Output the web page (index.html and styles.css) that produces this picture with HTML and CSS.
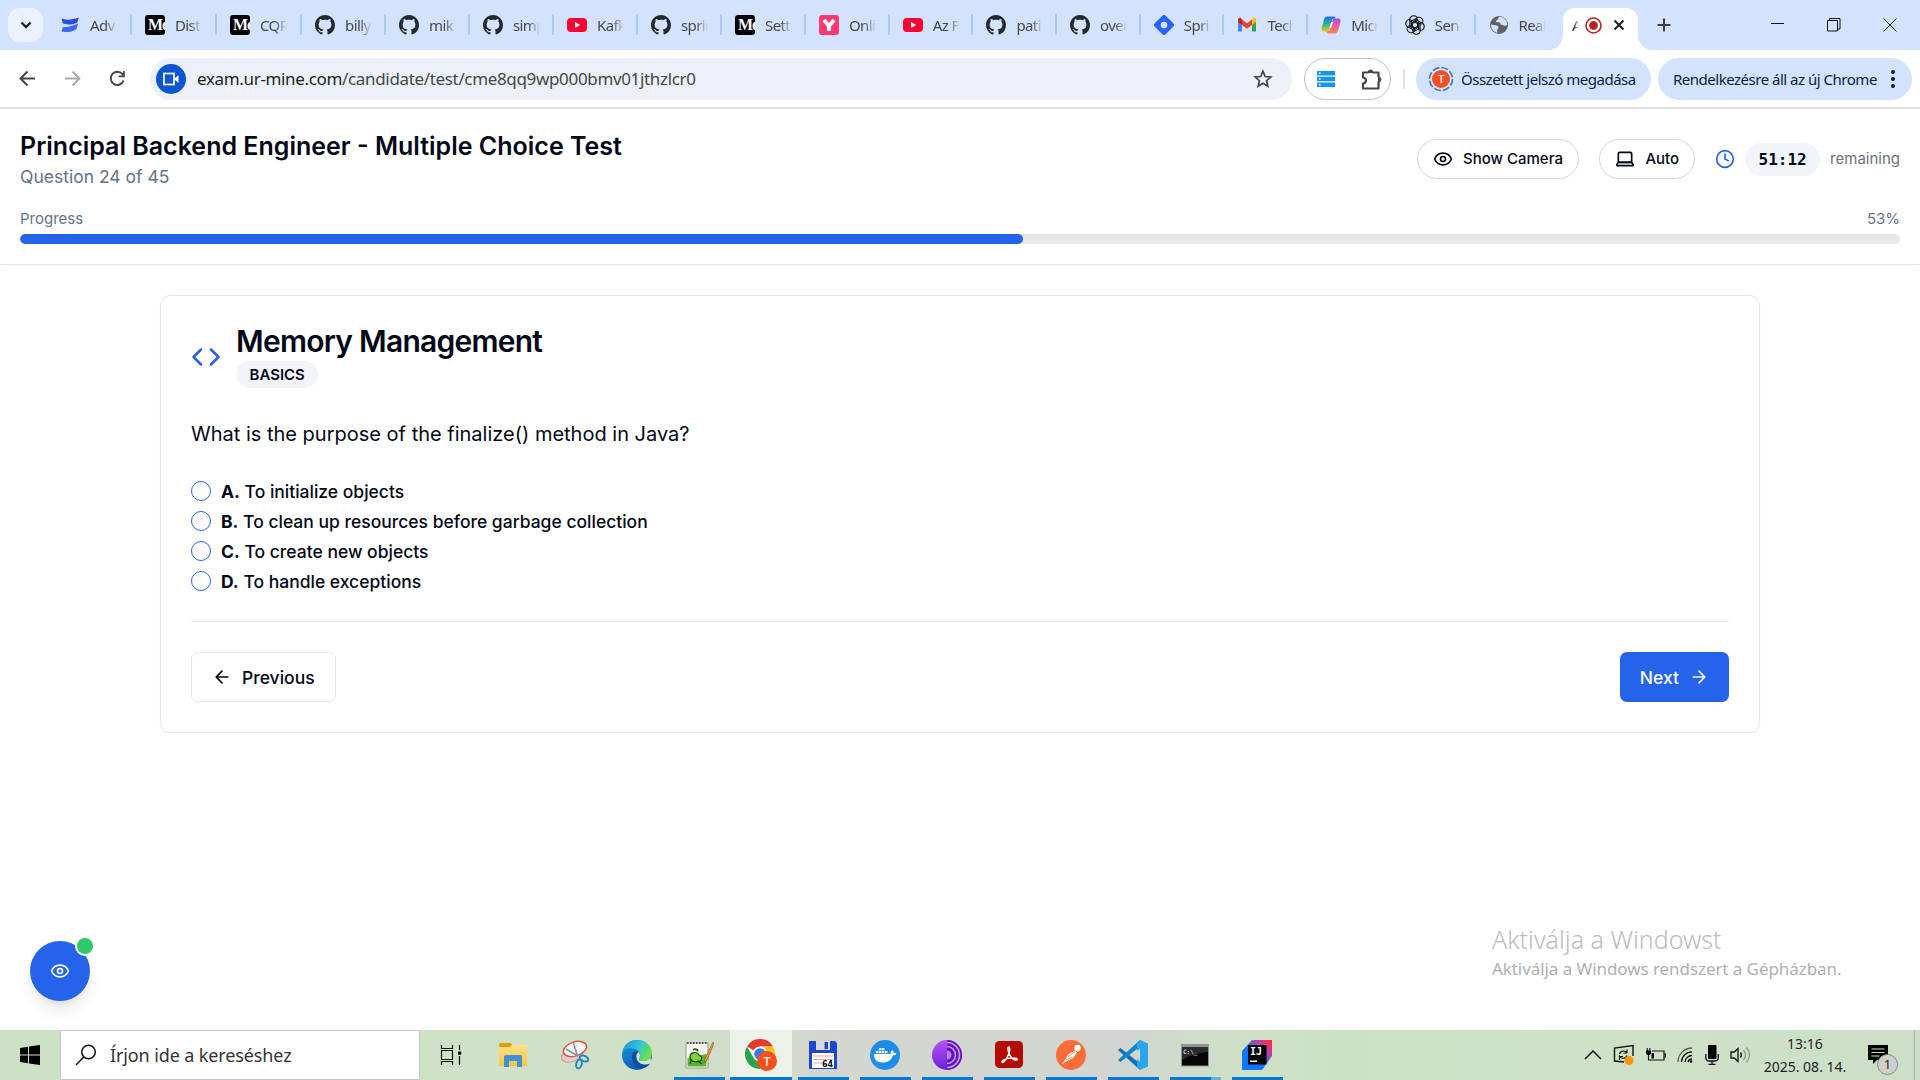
FILE: index.html
```html
<!DOCTYPE html>
<html lang="hu">
<head>
<meta charset="utf-8">
<title>Principal Backend Engineer - Multiple Choice Test</title>
<link rel="stylesheet" href="styles.css">
</head>
<body>
<svg class="defs" width="0" height="0" aria-hidden="true">
  <defs>
    <linearGradient id="edgeA" x1="0" y1="0" x2="1" y2="0.4"><stop offset="0" stop-color="#1b8fd6"/><stop offset="0.55" stop-color="#2fc2df"/><stop offset="1" stop-color="#6be04c"/></linearGradient>
    <linearGradient id="edgeB" x1="0" y1="0" x2="0.6" y2="1"><stop offset="0" stop-color="#1a9be0"/><stop offset="1" stop-color="#0b55b5"/></linearGradient>
    <linearGradient id="copA" x1="0" y1="0" x2="0" y2="1"><stop offset="0" stop-color="#1b6df0"/><stop offset="0.55" stop-color="#35b88a"/><stop offset="1" stop-color="#f5c51c"/></linearGradient>
    <linearGradient id="copB" x1="0" y1="0" x2="0" y2="1"><stop offset="0" stop-color="#a04df0"/><stop offset="0.5" stop-color="#ee5aa0"/><stop offset="1" stop-color="#f78a3c"/></linearGradient>
    <linearGradient id="ideaBg" x1="0" y1="1" x2="1" y2="0"><stop offset="0" stop-color="#087cfa"/><stop offset="0.45" stop-color="#1573f5"/><stop offset="0.7" stop-color="#a44bb5"/><stop offset="0.9" stop-color="#fe2857"/></linearGradient>
    <linearGradient id="folder" x1="0" y1="0" x2="0" y2="1"><stop offset="0" stop-color="#ffe08a"/><stop offset="1" stop-color="#fac73a"/></linearGradient>
    <linearGradient id="torL" x1="0" y1="0" x2="0" y2="1"><stop offset="0" stop-color="#b753f5"/><stop offset="1" stop-color="#6a21d8"/></linearGradient>
  </defs>
  <symbol id="conf" viewBox="0 0 20 20"><path d="M1.500 3.600C6 5.400 12 4.800 18.800 2.600L17.300 7.400C13 9.600 7 10 2.800 8.600z" fill="#2a4fe0"/><path d="M2.800 12.200C8 12.200 13 11 18 8.600L16.400 14.200C12 17 6 17.600 1.500 16.600z" fill="#3b66f6"/></symbol>
  <symbol id="gh" viewBox="0 0 16 16"><path fill="#24292f" d="M8 0C3.580 0 0 3.580 0 8c0 3.540 2.290 6.530 5.470 7.590.4.070.55-.17.55-.38 0-.19-.01-.82-.01-1.490-2.010.37-2.530-.49-2.690-.94-.09-.23-.48-.94-.82-1.130-.28-.15-.68-.52-.01-.53.63-.01 1.080.58 1.230.82.72 1.210 1.870.87 2.330.66.070-.52.28-.87.51-1.070-1.780-.2-3.640-.89-3.640-3.950 0-.87.31-1.590.82-2.150-.08-.2-.36-1.020.08-2.120 0 0 .67-.21 2.200.82.640-.18 1.320-.27 2-.27s1.360.09 2 .27c1.530-1.040 2.200-.82 2.200-.82.44 1.100.16 1.920.08 2.120.51.56.82 1.270.82 2.150 0 3.070-1.870 3.750-3.650 3.950.29.25.54.73.54 1.480 0 1.070-.01 1.930-.01 2.200 0 .21.15.46.55.38A8.010 8.010 0 0 0 16 8c0-4.420-3.580-8-8-8z"/></symbol>
  <symbol id="yt" viewBox="0 0 20 20"><rect y="3" width="20" height="14" rx="4" fill="#ff0033"/><path d="M8 7l5.200 3L8 13z" fill="#fff"/></symbol>
  <symbol id="ylogo" viewBox="0 0 20 20"><rect width="20" height="20" rx="3" fill="#fb3a74"/><path d="M5 5l5 6 5-6M10 10.500V16" fill="none" stroke="#fff" stroke-width="3.800"/></symbol>
  <symbol id="diamond" viewBox="0 0 20 20"><path d="M8.300.8a2.400 2.400 0 0 1 3.400 0l7.500 7.500a2.400 2.400 0 0 1 0 3.400l-7.500 7.500a2.400 2.400 0 0 1-3.400 0L.8 11.700a2.400 2.400 0 0 1 0-3.400z" fill="#2962f6"/><circle cx="10" cy="10" r="3.300" fill="#d3e2fd"/></symbol>
  <symbol id="gmail" viewBox="0 0 20 20"><path d="M1 5v11.500h4V9z" fill="#4285f4"/><path d="M15 9v7.500h4V5z" fill="#34a853"/><path d="M15 4.500V10l4-3V5c0-2-2-2.600-3-1.800z" fill="#fbbc04"/><path d="M5 4.500V10l5 3.700 5-3.700V4.500l-5 3.800z" fill="#ea4335"/><path d="M1 5v2l4 3V4.500L4 3.200C3 2.400 1 3 1 5z" fill="#c5221f"/></symbol>
  <symbol id="copilot" viewBox="0 0 20 20"><path d="M6 1.500h6.500c1.400 0 1.900.8 2.200 2L11.500 4 8.300 14.500c-.4 1.400-1 2-2.400 2H3C.6 16.500 0 15 .6 12.800L3 4.500c.6-2 1.500-3 3-3z" fill="url(#copA)"/><path d="M14 18.500H7.500c-1.400 0-1.900-.8-2.200-2l3-.5 3.400-10.500c.4-1.400 1-2 2.400-2H17c2.400 0 3 1.500 2.400 3.700L17 15.500c-.6 2-1.500 3-3 3z" fill="url(#copB)"/><path d="M10.300 7h2L10.100 13h-2z" fill="#f4f2fb"/></symbol>
  <symbol id="gpt" viewBox="0 0 20 20"><g fill="none" stroke="#111" stroke-width="1.150"><path id="petal" d="M4.900 12.500V6.100A3.900 3.900 0 0 1 12.400 3.400M7.400 11.500V7.300L12.800 4.200"/><use href="#petal" transform="rotate(60 10 10)"/><use href="#petal" transform="rotate(120 10 10)"/><use href="#petal" transform="rotate(180 10 10)"/><use href="#petal" transform="rotate(240 10 10)"/><use href="#petal" transform="rotate(300 10 10)"/></g></symbol>
  <symbol id="globe" viewBox="0 0 20 20"><circle cx="10" cy="10" r="9" fill="#5f6368"/><path d="M10.500 1.800c-2 1.200-.5 2.200-2.500 3.200s-1 2.200.5 2.300 3 .2 3 1.700 2.500.7 3.300 1.500 2.700 0 3.500-1C18 5 14.500 1.800 10.500 1.800zM2 9.500c2 0 3.500.8 5.500 1s2.500 2 1.500 3-1 2-.5 4.200C5 17.500 1.800 14 2 9.500z" fill="#d3e2fd"/></symbol>
  <symbol id="eye" viewBox="0 0 24 24"><g fill="none" stroke="currentColor" stroke-width="2" stroke-linecap="round" stroke-linejoin="round"><path d="M2.062 12.348a1 1 0 0 1 0-.696 10.750 10.750 0 0 1 19.876 0 1 1 0 0 1 0 .696 10.750 10.750 0 0 1-19.876 0"/><circle cx="12" cy="12" r="3"/></g></symbol>
</svg>

<header class="tabstrip">
  <div class="tabsearch"><svg width="14" height="14" viewBox="0 0 14 14"><path d="M2.500 4.500L7 9l4.500-4.500" fill="none" stroke="#1f1f1f" stroke-width="2.400"/></svg></div>
  <div class="tabs">
    <div class="tab"><svg class="fav"><use href="#conf"/></svg><span>Adv</span></div>
    <div class="tab"><i class="fav medium">Me</i><span>Dist</span></div>
    <div class="tab"><i class="fav medium">Me</i><span>CQR</span></div>
    <div class="tab"><svg class="fav"><use href="#gh"/></svg><span>billy</span></div>
    <div class="tab"><svg class="fav"><use href="#gh"/></svg><span>mik</span></div>
    <div class="tab"><svg class="fav"><use href="#gh"/></svg><span>simp</span></div>
    <div class="tab"><svg class="fav"><use href="#yt"/></svg><span>Kafk</span></div>
    <div class="tab"><svg class="fav"><use href="#gh"/></svg><span>sprin</span></div>
    <div class="tab"><i class="fav medium">Me</i><span>Sett</span></div>
    <div class="tab"><svg class="fav"><use href="#ylogo"/></svg><span>Onli</span></div>
    <div class="tab"><svg class="fav"><use href="#yt"/></svg><span>Az F</span></div>
    <div class="tab"><svg class="fav"><use href="#gh"/></svg><span>pati</span></div>
    <div class="tab"><svg class="fav"><use href="#gh"/></svg><span>over</span></div>
    <div class="tab"><svg class="fav"><use href="#diamond"/></svg><span>Spri</span></div>
    <div class="tab"><svg class="fav"><use href="#gmail"/></svg><span>Tech</span></div>
    <div class="tab"><svg class="fav"><use href="#copilot"/></svg><span>Micr</span></div>
    <div class="tab"><svg class="fav"><use href="#gpt"/></svg><span>Sen</span></div>
    <div class="tab last"><svg class="fav"><use href="#globe"/></svg><span>Real</span></div>
  </div>
  <div class="tab-active">
    <span>A</span>
    <svg width="17" height="17" viewBox="0 0 17 17"><circle cx="8.500" cy="8.500" r="7.500" fill="none" stroke="#b3261e" stroke-width="1.600"/><circle cx="8.500" cy="8.500" r="4.400" fill="#b3261e"/></svg>
    <svg width="12" height="12" viewBox="0 0 12 12"><path d="M1.500 1.500l9 9M10.500 1.500l-9 9" stroke="#1f1f1f" stroke-width="2"/></svg>
  </div>
  <svg class="plus" width="14" height="14" viewBox="0 0 14 14"><path d="M7 .5v13M.5 7h13" stroke="#3c4043" stroke-width="2"/></svg>
  <div class="winctl">
    <svg width="14" height="14" viewBox="0 0 14 14"><path d="M0 5.500h13" stroke="#111" stroke-width="1"/></svg>
    <svg width="14" height="14" viewBox="0 0 14 14"><path d="M.5 2.500h10v10.500h-10zM2.500 2.500v-2h10.500v10.500h-2.500" fill="none" stroke="#111"/></svg>
    <svg width="14" height="14" viewBox="0 0 14 14"><path d="M.5.5l13 13M13.500.5l-13 13" stroke="#222"/></svg>
  </div>
</header>

<nav class="toolbar">
  <div class="navbtns">
    <svg width="17" height="17" viewBox="0 0 17 17"><path d="M16 8.500H2M8.500 1.500l-7 7 7 7" fill="none" stroke="#444746" stroke-width="2"/></svg>
    <svg width="17" height="17" viewBox="0 0 17 17"><path d="M1 8.500h14M8.500 1.500l7 7-7 7" fill="none" stroke="#a9abad" stroke-width="2"/></svg>
    <svg width="17" height="17" viewBox="0 0 17 17"><path d="M14.600 10.500a6.600 6.600 0 1 1-1.300-6.600L15 5.800" fill="none" stroke="#444746" stroke-width="2"/><path d="M15.800 1v6.200H9.600V5.400H14V1z" fill="#444746"/></svg>
  </div>
  <div class="omnibox">
    <div class="cam"><svg width="16" height="14" viewBox="0 0 16 14"><rect x="1" y="1.500" width="10" height="11" fill="none" stroke="#fff" stroke-width="1.700"/><path d="M11 7l4.500-4v8z" fill="#fff"/></svg></div>
    <div class="url"><b>exam.ur-mine.com</b>/candidate/test/cme8qq9wp000bmv01jthzlcr0</div>
    <svg class="star" width="20" height="20" viewBox="0 0 20 20"><path d="M10 2.300l2.200 5.200 5.600.5-4.200 3.700 1.200 5.500L10 14.300l-4.800 2.900 1.200-5.500L2.200 8l5.600-.5z" fill="none" stroke="#444746" stroke-width="1.700"/></svg>
  </div>
  <div class="exts">
    <svg width="18" height="16" viewBox="0 0 18 16"><g fill="#1795f5"><path d="M0 0h18v4.400H0zM0 5.800h18v4.400H0zM0 11.600h18V16H0z"/></g><g fill="#fff"><path d="M2 1.500h1.500v1.500H2zM2 7.300h1.500v1.500H2zM2 13h1.500v1.500H2z"/></g></svg>
    <svg width="22" height="22" viewBox="0 0 22 22"><path d="M2 4.500h5.500M11.500 4.500H17.500V9M17.500 13.500V20.500H2V15.500c4-.5 4-5.500 0-6V4.500H7" fill="none" stroke="#444746" stroke-width="2.200" stroke-linejoin="round"/><path d="M7 4.500a2.500 2.500 0 0 1 5 0zM17.500 9a2.500 2.500 0 0 1 0 5z" fill="#444746" stroke="#444746"/></svg>
  </div>
  <i class="vsep"></i>
  <div class="chip profile">
    <svg width="26" height="26" viewBox="0 0 26 26"><circle cx="13" cy="13" r="11.500" fill="none" stroke="#4f78b8" stroke-width="1.700" stroke-dasharray="7 2.030"/><circle cx="13" cy="13" r="9" fill="#f4511e"/><text x="13" y="17" text-anchor="middle" class="avatar-t">T</text></svg>
    <span>Összetett jelszó megadása</span>
  </div>
  <div class="chip update">
    <span>Rendelkezésre áll az új Chrome</span>
    <svg width="6" height="20" viewBox="0 0 6 20"><g fill="#041e49"><circle cx="3" cy="3" r="2"/><circle cx="3" cy="10" r="2"/><circle cx="3" cy="17" r="2"/></g></svg>
  </div>
</nav>

<main class="page">
  <section class="exam-head">
    <div class="head-row">
      <div>
        <h1>Principal Backend Engineer - Multiple Choice Test</h1>
        <p class="sub">Question 24 of 45</p>
      </div>
      <div class="head-tools">
        <button class="pill"><svg width="20" height="20"><use href="#eye"/></svg>Show Camera</button>
        <button class="pill auto"><svg width="20" height="20" viewBox="0 0 24 24"><g fill="none" stroke="currentColor" stroke-width="2" stroke-linejoin="round"><rect x="4" y="4" width="16" height="12" rx="1.500"/><path d="M4 16L2.200 18.500Q2 20 3.500 20h17Q22 20 21.800 18.500L20 16z"/></g></svg>Auto</button>
        <div class="timer">
          <svg width="20" height="20" viewBox="0 0 24 24"><g fill="none" stroke="#2563eb" stroke-width="2" stroke-linecap="round" stroke-linejoin="round"><circle cx="12" cy="12" r="10"/><path d="M12 6v6l4 2"/></g></svg>
          <span class="time">51:12</span>
          <span class="muted">remaining</span>
        </div>
      </div>
    </div>
    <div class="prog-row"><span>Progress</span><span>53%</span></div>
    <div class="bar"><div class="fill" style="width:53.33%"></div></div>
  </section>

  <section class="card">
    <div class="card-head">
      <svg width="30" height="30" viewBox="0 0 24 24"><path d="M16 18l6-6-6-6M8 6l-6 6 6 6" fill="none" stroke="#2563eb" stroke-width="2" stroke-linecap="round" stroke-linejoin="round"/></svg>
      <div>
        <h2>Memory Management</h2>
        <span class="badge">BASICS</span>
      </div>
    </div>
    <p class="question">What is the purpose of the finalize() method in Java?</p>
    <ul class="options">
      <li><i></i><span><b>A.</b> To initialize objects</span></li>
      <li><i></i><span><b>B.</b> To clean up resources before garbage collection</span></li>
      <li><i></i><span><b>C.</b> To create new objects</span></li>
      <li><i></i><span><b>D.</b> To handle exceptions</span></li>
    </ul>
    <div class="actions">
      <button class="btn prev"><svg width="20" height="20" viewBox="0 0 24 24"><path d="M12 19l-7-7 7-7M19 12H5" fill="none" stroke="currentColor" stroke-width="2" stroke-linecap="round" stroke-linejoin="round"/></svg>Previous</button>
      <button class="btn next">Next<svg width="20" height="20" viewBox="0 0 24 24"><path d="M5 12h14M12 5l7 7-7 7" fill="none" stroke="currentColor" stroke-width="2" stroke-linecap="round" stroke-linejoin="round"/></svg></button>
    </div>
  </section>

  <div class="fab"><svg width="20" height="20"><use href="#eye"/></svg><i></i></div>
  <div class="watermark"><div class="w1">Aktiválja a Windowst</div><div class="w2">Aktiválja a Windows rendszert a Gépházban.</div></div>
</main>

<footer class="taskbar">
  <div class="start"><svg width="22" height="22" viewBox="0 0 22 22"><path d="M1 4l8-1.200v7.700H1zM10 2.600L21 1v9.500H10zM1 11.500h8v7.700L1 18zM10 11.500h11V21l-11-1.600z" fill="#000"/></svg></div>
  <div class="search"><svg width="22" height="22" viewBox="0 0 22 22"><circle cx="13.500" cy="8" r="6.800" fill="none" stroke="#111" stroke-width="1.500"/><path d="M8.800 13L1 21" stroke="#111" stroke-width="1.500"/></svg><span>Írjon ide a kereséshez</span></div>
  <div class="apps">
    <div class="app"><svg width="22" height="20" viewBox="0 0 22 20"><path d="M1.500 0v3.500h11V0M1.500 20v-3.500h11V20M1.500 5.500h11v9h-11zM19.500 0v5M19.500 11v9" fill="none" stroke="#111" stroke-width="1.200"/><path d="M18 6.500h3.200v3.200H18z"/></svg></div>
    <div class="app"><svg width="28" height="24" viewBox="0 0 28 24"><path d="M0 2Q0 0 1.500 0H11q1.500 0 2 1.500L14 4H0z" fill="#e0a000"/><path d="M0 4h11l2-2h15v21H0z" fill="url(#folder)"/><path d="M5 24V13.500q0-1.500 1.500-1.500h15q1.500 0 1.500 1.500V24h-5v-6h-8v6z" fill="#3f92d8"/></svg></div>
    <div class="app"><svg width="30" height="30" viewBox="0 0 30 30"><ellipse cx="12" cy="15" rx="11" ry="6.500" transform="rotate(-20 12 15)" fill="#d8d3cc" stroke="#e09086"/><ellipse cx="15" cy="9" rx="12" ry="7" transform="rotate(-18 15 9)" fill="#f8f8f8" stroke="#e3514b" stroke-width="1.500"/><path d="M13.500 3l4 13M6 9l12 7" stroke="#8b8f95" stroke-width="1.500"/><g fill="none" stroke="#1f86c9" stroke-width="2"><ellipse cx="24" cy="18.500" rx="4.500" ry="2.700" transform="rotate(25 24 18.500)"/><ellipse cx="19" cy="24" rx="2.700" ry="4.500" transform="rotate(15 19 24)"/></g></svg></div>
    <div class="app"><svg width="30" height="30" viewBox="0 0 30 30"><circle cx="15" cy="15" r="15" fill="url(#edgeB)"/><path d="M.4 12C2 4 8 0 15 0c9 0 15 6 15 13 0 5-4 8-9 8-3 0-5-1-4-2.500 2-2 1.500-6-1-8C11 7 4 7.500.4 12z" fill="url(#edgeA)"/><path d="M10.500 14c-2 5 1 13 9 14 4 .3 7-2 8.500-4.500-4 2-9.500 1.500-12.500-2C13 18.500 13.500 14 16 12c-2-1.500-4.500-.5-5.500 2z" fill="#134c9e"/><path d="M17 18.500c-1 1.500 1 2.500 4 2.500 3.500 0 6-1.500 7.500-3.500l.5 5-2.500 1.500C21 26 15 23 14.500 17c-.2-2.500 1-4.500 2.300-5 1.700 2 1.700 4.500.2 6.500z" fill="#d5e4cf"/></svg></div>
    <div class="app run"><svg width="30" height="28" viewBox="0 0 30 28"><path d="M2 2h22v25H2z" fill="#f7f7f2" stroke="#9a9a95"/><path d="M3 2h20" stroke="#555" stroke-width="2" stroke-dasharray="1.500 1.500"/><path d="M3.500 17L22.500 13v12.500h-19z" fill="#58b828"/><path d="M6 16c0-5 7-6 9-2 3 1 4 4 1 6-3 1-7 1-9-1zM9 9c2-2 5-1 5 1.500M14 20l4 3M7 20l-1 3" fill="#7bd43a" stroke="#263b12" stroke-width="1.200"/><path d="M29 1l-8 17-1.200 4 3.300-3L30 2z" fill="#eaa933" stroke="#8c5a17" stroke-width=".7"/></svg></div>
    <div class="app run active"><svg width="32" height="32" viewBox="0 0 32 32"><circle cx="15" cy="15" r="15" fill="#fff"/><path d="M15 15L2 7.500A15 15 0 0 1 28 7.500H15z" fill="#e33b2e"/><path d="M15 15l6.500 3.800L15 30A15 15 0 0 1 2 7.500L8.500 18.500z" fill="#2ba24c"/><path d="M15 7.500h13A15 15 0 0 1 15 30l6.500-11.200z" fill="#fcc31e"/><circle cx="15" cy="15" r="7.500" fill="#fff"/><circle cx="15" cy="15" r="5.800" fill="#3b78e7"/><circle cx="22" cy="22" r="10" fill="#f4511e"/><text x="22" y="26.500" text-anchor="middle" class="chrome-t">T</text></svg></div>
    <div class="app run"><svg width="28" height="28" viewBox="0 0 28 28"><path d="M0 0h26l2 2v26H0z" fill="#1f46cc"/><path d="M7 0h14v9H7z" fill="#d8dade"/><path d="M15.500 1h3.500v7h-3.500z" fill="#1f46cc"/><path d="M3 12h22v15H3z" fill="#fff"/><path d="M4 15h20M4 18.500h20M4 22h9" stroke="#eda3a3" stroke-width="1.200"/><text x="13" y="26" class="disk-t">64</text></svg></div>
    <div class="app run"><svg width="30" height="30" viewBox="0 0 30 30"><circle cx="15" cy="15" r="15" fill="#1d8ceb"/><path d="M4 14h16.500c0-2 .5-3 1.800-4 1 .8 1.400 1.800 1.300 2.800 1.300-.2 2.200 0 3 .6-.7 1.300-2 1.800-3.600 1.800C21.500 20 18 22.500 12.500 22.500 6.500 22.500 3.800 19 4 14z" fill="#fff"/><path d="M6 11h2.400v2.300H6zM9 11h2.400v2.300H9zM12 11h2.400v2.300H12zM15 11h2.400v2.300H15zM9 8h2.400v2.300H9zM12 8h2.400v2.300H12z" fill="#fff"/></svg></div>
    <div class="app run"><svg width="30" height="30" viewBox="0 0 30 30"><circle cx="15" cy="15" r="15" fill="url(#torL)"/><path d="M15 0a15 15 0 0 1 0 30z" fill="#6412bb"/><g fill="none" stroke="#c79af0" stroke-width="1.600"><path d="M15 2.500a12.500 12.500 0 0 1 0 25M15 6.500a8.500 8.500 0 0 1 0 17"/></g><path d="M15 10.500a4.500 4.500 0 0 1 0 9z" fill="#b583e3"/></svg></div>
    <div class="app run"><svg width="28" height="28" viewBox="0 0 28 28"><rect width="28" height="27" rx="4.500" fill="#b30b00"/><path d="M14 6c-2 0-1 4 .5 7.500 2 4 5 6 7 5.500 2-.7-.5-2.500-6-2-4.500.5-9 2.500-8.500 4 .7 1.500 3-.5 5-4.500 2-4 3.500-9 2-10.500z" fill="none" stroke="#fff" stroke-width="1.500"/></svg></div>
    <div class="app run"><svg width="30" height="30" viewBox="0 0 30 30"><circle cx="15" cy="15" r="15" fill="#ff6c37"/><circle cx="21.500" cy="8" r="3.200" fill="#fff"/><path d="M19 10.500l2 2-4 5.500-6 3-5.500 3.500 4.500-6 2-4z" fill="#fff"/><path d="M12 16.500l7-5M10 20l6-3" stroke="#ff6c37" stroke-width=".8"/></svg></div>
    <div class="app run"><svg width="30" height="30" viewBox="0 0 30 30"><path d="M0 10l2.500-2L22 23.500V30z" fill="#0b72b9"/><path d="M0 20l2.500 2L22 6.500V0z" fill="#1183c8"/><path d="M22 0l8 3.500v23L22 30l-3-3V3z" fill="#2aa6ef"/><path d="M22 8.500L13.500 15l8.500 6.500z" fill="#d1d4d0"/></svg></div>
    <div class="app run multi"><svg width="28" height="23" viewBox="0 0 28 23"><rect width="28" height="22.500" fill="#8f9499"/><rect x="1" y="3" width="26" height="18.500" fill="#050505"/><path d="M1 3h26v5Q12 9 1 16z" fill="#2b2b2b"/><text x="2" y="10" class="cmd-t">C:\_</text></svg></div>
    <div class="app run"><svg width="30" height="30" viewBox="0 0 30 30"><path d="M10 0h20v16L20 30H0V11z" fill="url(#ideaBg)"/><rect x="6" y="5" width="18.500" height="19.500" fill="#000"/><text x="8" y="14.500" class="idea-t">IJ</text><path d="M8 20.500h7v1.500H8z" fill="#fff"/></svg></div>
  </div>
  <div class="tray">
    <svg width="18" height="12" viewBox="0 0 18 12"><path d="M1 10l8-8 8 8" fill="none" stroke="#111" stroke-width="1.500"/></svg>
    <svg width="22" height="22" viewBox="0 0 22 22"><path d="M11 18l-9.500-1V4L20 1.500V12" fill="none" stroke="#111" stroke-width="1.400"/><path d="M6.500 10c1-3.500 6-4 7.500-1V5.500M14 9h-3.500M14 11.500c-1 3.500-6 3.500-7.500 1V16M6.500 12.500H10" fill="none" stroke="#111" stroke-width="1.200"/><circle cx="16" cy="16.500" r="4.500" fill="#ff9800"/></svg>
    <svg width="20" height="14" viewBox="0 0 20 14"><path d="M6 3h12v9H4.500M18 6h1.500v3H18" fill="none" stroke="#111" stroke-width="1.200"/><path d="M5.500 5h2.500v5.500H5.500zM0 2.500h5v3L3.800 7H1.200L0 5.500z"/><path d="M1.300 0v3M3.800 0v3M2.500 7v5h2.500" fill="none" stroke="#111" stroke-width="1.100"/></svg>
    <svg width="16" height="16" viewBox="0 0 16 16"><g fill="none" stroke="#111" stroke-width="1.300"><path d="M1 15A14 14 0 0 1 15 1" opacity=".65"/><path d="M4.500 15A10.500 10.500 0 0 1 15 4.800M8 15a7 7 0 0 1 7-6.500"/></g><path d="M11 15a4 4 0 0 1 4-3" fill="none" stroke="#111" stroke-width="1.300"/><circle cx="14" cy="14.500" r="1.300"/></svg>
    <svg width="14" height="20" viewBox="0 0 14 20"><rect x="3" width="8.500" height="14" rx="1"/><path d="M.8 9v3.500q0 3.500 3.500 3.500h5.500q3.500 0 3.500-3.500V9M7 16v3.500M3.500 19.500h7" fill="none" stroke="#111" stroke-width="1.300"/></svg>
    <svg width="21" height="18" viewBox="0 0 21 18"><path d="M1 6h3.200L8 2.500v13L4.200 12H1z" fill="none" stroke="#111" stroke-width="1.300"/><path d="M10.500 6.500q1.800 2.500 0 5" fill="none" stroke="#111" stroke-width="1.300"/><path d="M13.500 4q4 5 0 10M16.500 1.500q6 7.500 0 15" fill="none" stroke="#8c9a8a" stroke-width="1.300"/></svg>
  </div>
  <div class="clock"><div>13:16</div><div>2025. 08. 14.</div></div>
  <div class="notif"><svg width="20" height="20" viewBox="0 0 20 20"><path d="M0 0h20v15H9l-4 4v-4H0z"/><path d="M3.500 4h13M3.500 7.500h13M3.500 11h8" stroke="#cfe0c8" stroke-width="1.200"/></svg><i>1</i></div>
</footer>
</body>
</html>
```
FILE: styles.css
```css
* { box-sizing: border-box; }
body { margin: 0; width: 1920px; height: 1080px; overflow: hidden; display: flex; flex-direction: column; background: #fff; font-family: "Noto Sans", "Open Sans", sans-serif; color: #1f1f1f; }
.defs { position: absolute; }
svg { display: block; flex: none; }
i { font-style: normal; }
h1, h2, p, ul { margin: 0; padding: 0; }
button { font: inherit; }

/* tab strip */
.tabstrip { height: 50px; flex: none; background: #d3e2fd; display: flex; }
.tabsearch { width: 35px; height: 34px; margin: 8px 4px 0 8px; border-radius: 12px; background: #ecf2fd; display: flex; align-items: center; justify-content: center; }
.tabs { display: grid; grid-template-columns: repeat(3, 85px) repeat(6, 84px) repeat(9, 83.700px); width: 1512px; }
.tab { display: flex; align-items: center; padding-left: 13px; position: relative; }
.tab::after { content: ""; position: absolute; right: 0; top: 14px; width: 2px; height: 21px; background: #a8c7fa; border-radius: 1px; }
.tab.last::after { display: none; }
.fav { width: 20px; height: 20px; flex: none; }
.medium { background: #000; color: #fff; border-radius: 3px; overflow: hidden; font: bold 16px/20px "Liberation Serif", serif; padding-left: 3px; letter-spacing: -1px; }
.tab span { margin-left: 10px; width: 27px; overflow: hidden; white-space: nowrap; font-size: 15px; letter-spacing: -0.6px; color: #474747; -webkit-mask-image: linear-gradient(90deg, #000 55%, transparent); mask-image: linear-gradient(90deg, #000 55%, transparent); }
.tab-active { width: 75px; height: 42px; margin: 8px 0 0 4px; background: #fff; border-radius: 12px 12px 0 0; position: relative; display: flex; align-items: center; padding: 0 13px 8px 9px; }
.tab-active::before, .tab-active::after { content: ""; position: absolute; bottom: 0; width: 14px; height: 14px; }
.tab-active::before { left: -14px; background: radial-gradient(circle at 0 0, transparent 13.500px, #fff 14px); }
.tab-active::after { right: -14px; background: radial-gradient(circle at 100% 0, transparent 13.500px, #fff 14px); }
.tab-active span { width: 7px; margin-right: 6px; overflow: hidden; font-size: 15px; -webkit-mask-image: linear-gradient(90deg, #000 30%, transparent); mask-image: linear-gradient(90deg, #000 30%, transparent); }
.tab-active svg + svg { margin-left: 11px; }
.plus { margin: 18px 0 0 19px; }
.winctl { margin: 18px 23px 0 auto; display: flex; gap: 42px; }

/* toolbar */
.toolbar { height: 59px; flex: none; display: flex; align-items: center; background: #fff; border-bottom: 2px solid #dfdfdf; padding-left: 19px; }
.navbtns { display: flex; gap: 28px; width: 131px; }
.omnibox { width: 1142px; height: 42px; border-radius: 21px; background: #ebf0f9; display: flex; align-items: center; padding: 0 19px 0 6px; }
.cam { width: 30px; height: 30px; border-radius: 50%; background: #0b57d0; display: flex; align-items: center; justify-content: center; }
.url { margin-left: 11px; font-size: 17px; white-space: nowrap; color: #474747; letter-spacing: -0.340px; }
.url b { font-weight: 400; color: #1f1f1f; }
.star { margin-left: auto; }
.exts { width: 87px; height: 42px; margin-left: 12px; border: 1px solid #c2c4c6; border-radius: 21px; display: flex; align-items: center; justify-content: space-between; padding: 0 7px 0 12px; }
.vsep { width: 2px; height: 20px; background: #d3e2fd; margin: 0 11px 0 12px; }
.chip { height: 42px; border-radius: 21px; background: #d3e2fd; color: #041e49; font-size: 15px; display: flex; align-items: center; white-space: nowrap; letter-spacing: -0.490px; }
.profile { width: 235px; padding-left: 12px; gap: 7px; }
.update { width: 254px; margin-left: 7px; padding: 0 16px 0 15px; justify-content: space-between; }
.avatar-t { font: 500 11px Roboto, sans-serif; fill: #fff; }

/* page */
.page { flex: 1; min-height: 0; position: relative; font-family: Inter, sans-serif; color: #020817; }
.exam-head { height: 156px; padding: 20px; border-bottom: 1px solid #e2e8f0; box-shadow: 0 1px 2px rgba(0,0,0,.05); }
.head-row { display: flex; justify-content: space-between; align-items: center; height: 60px; }
h1 { font-size: 25px; line-height: 35px; font-weight: 600; white-space: nowrap; }
.sub { font-size: 17.500px; line-height: 25px; color: #64748b; }
.head-tools { display: flex; align-items: center; gap: 20px; }
.pill { height: 40px; border: 1px solid #d1d5db; border-radius: 20px; background: #fff; color: #020817; font-size: 15px; font-weight: 500; display: flex; align-items: center; gap: 10px; padding: 0 15px 1px; }
.pill:not(.auto) { padding-right: 15.500px; }
.timer { display: flex; align-items: center; gap: 10px; }
.time { height: 33px; border-radius: 17px; background: #f1f5f9; width: 75px; text-align: center; font: bold 16px/33px "DejaVu Sans Mono", monospace; }
.muted { font-size: 15px; color: #6b7280; padding-bottom: 1px; }
.prog-row { margin-top: 20px; display: flex; justify-content: space-between; font-size: 15px; line-height: 20px; color: #64748b; }
.bar { margin-top: 5px; height: 10px; border-radius: 5px; background: #e5e7eb; overflow: hidden; }
.fill { height: 10px; background: #2563eb; border-radius: 5px; }

.card { width: 1600px; height: 438px; margin: 30px auto 0; border: 1px solid #e2e8f0; border-radius: 10px; box-shadow: 0 1px 2px rgba(0,0,0,.05); padding: 29px 30px 0; }
.card-head { display: flex; align-items: center; gap: 15px; height: 63px; }
h2 { font-size: 30px; line-height: 30px; font-weight: 600; letter-spacing: -0.750px; }
.badge { display: block; width: fit-content; height: 27px; margin-top: 5px; border-radius: 14px; background: #f1f5f9; padding: 0 13.500px; font-size: 15px; line-height: 27px; font-weight: 600; }
.question { margin-top: 30px; font-size: 20px; line-height: 32px; }
.options { margin-top: 31px; list-style: none; display: grid; gap: 10px; }
.options li { display: flex; align-items: center; height: 20px; gap: 10px; font-size: 17.500px; font-weight: 500; }
.options i { width: 20px; height: 20px; border: 1px solid #2563eb; border-radius: 50%; }
.options b { font-weight: 700; }
.actions { margin-top: 30px; border-top: 1px solid #e2e8f0; padding-top: 30px; display: flex; justify-content: space-between; }
.btn { height: 50px; border-radius: 7px; font-size: 17.500px; font-weight: 500; display: flex; align-items: center; gap: 10px; padding: 0 20px; }
.prev { background: #fff; border: 1px solid #e2e8f0; color: #020817; }
.next { background: #2563eb; border: 0; color: #f8fafc; }

.fab { position: absolute; left: 30px; top: 832px; width: 60px; height: 60px; border-radius: 50%; background: #2563eb; color: #fff; display: flex; align-items: center; justify-content: center; box-shadow: 0 12px 18px -4px rgba(0,0,0,.1), 0 5px 8px -5px rgba(0,0,0,.1); }
.fab i { position: absolute; left: 45px; top: -5px; width: 20px; height: 20px; border-radius: 50%; border: 2px solid #fff; background: #2fc968; }
.watermark { position: absolute; left: 1492px; top: 812px; font-family: "Noto Sans", "Open Sans", sans-serif; white-space: nowrap; }
.w1 { font-size: 25px; line-height: 36px; color: #bcbcbc; font-weight: 300; }
.w2 { font-size: 17px; line-height: 24px; color: #b0b0b0; letter-spacing: -0.070px; }

/* taskbar */
.taskbar { height: 50px; flex: none; display: flex; background: linear-gradient(90deg, #cbe0c4 0, #cfe2c6 420px, #cfe0c6 660px, #d3d7cf 830px, #d2d5d1 1120px, #cfe0c7 1230px, #cbe3c5 1340px, #cfe2c8 1650px, #cbdfc8 1920px); }
.start { width: 60px; display: flex; align-items: center; justify-content: center; }
.search { width: 360px; background: #fff; border: 1px solid #c6c9c4; display: flex; align-items: center; padding-left: 14px; gap: 13px; font-size: 18px; letter-spacing: -0.120px; color: #333; }
.apps { display: grid; grid-template-columns: 61px repeat(13, 62px); margin-left: 1px; }
.app { display: flex; align-items: center; justify-content: center; position: relative; }
.app:first-child { padding-right: 2px; }
.run::after { content: ""; position: absolute; left: 6px; right: 5px; bottom: 0; height: 3px; background: #0078d7; }
.active { background: #edf2e9; }
.active::after { left: 0; right: 0; }
.multi::after { background: linear-gradient(90deg, #0078d7 41px, #6aaee0 41px); }
.chrome-t { font: 500 13px Roboto, sans-serif; fill: #ffe3da; }
.disk-t { font: bold 8px "DejaVu Sans", sans-serif; fill: #111; }
.cmd-t { font: bold 6px "DejaVu Sans Mono", monospace; fill: #ddd; }
.idea-t { font: bold 10px "DejaVu Sans Mono", monospace; fill: #fff; }
.tray { margin-left: auto; display: flex; align-items: center; gap: 11.300px; }
.clock { width: 108px; text-align: center; font-size: 14px; line-height: 23px; padding-top: 2px; white-space: nowrap; }
.notif { width: 56px; padding: 15px 0 0 9px; position: relative; border-right: 1px solid #a9b9a5; margin-right: 5px; }
.notif i { position: absolute; left: 18px; top: 24px; width: 21px; height: 21px; border-radius: 50%; background: #ccd2ca; border: 1px solid #888; font-size: 13px; line-height: 19px; text-align: center; }
```
